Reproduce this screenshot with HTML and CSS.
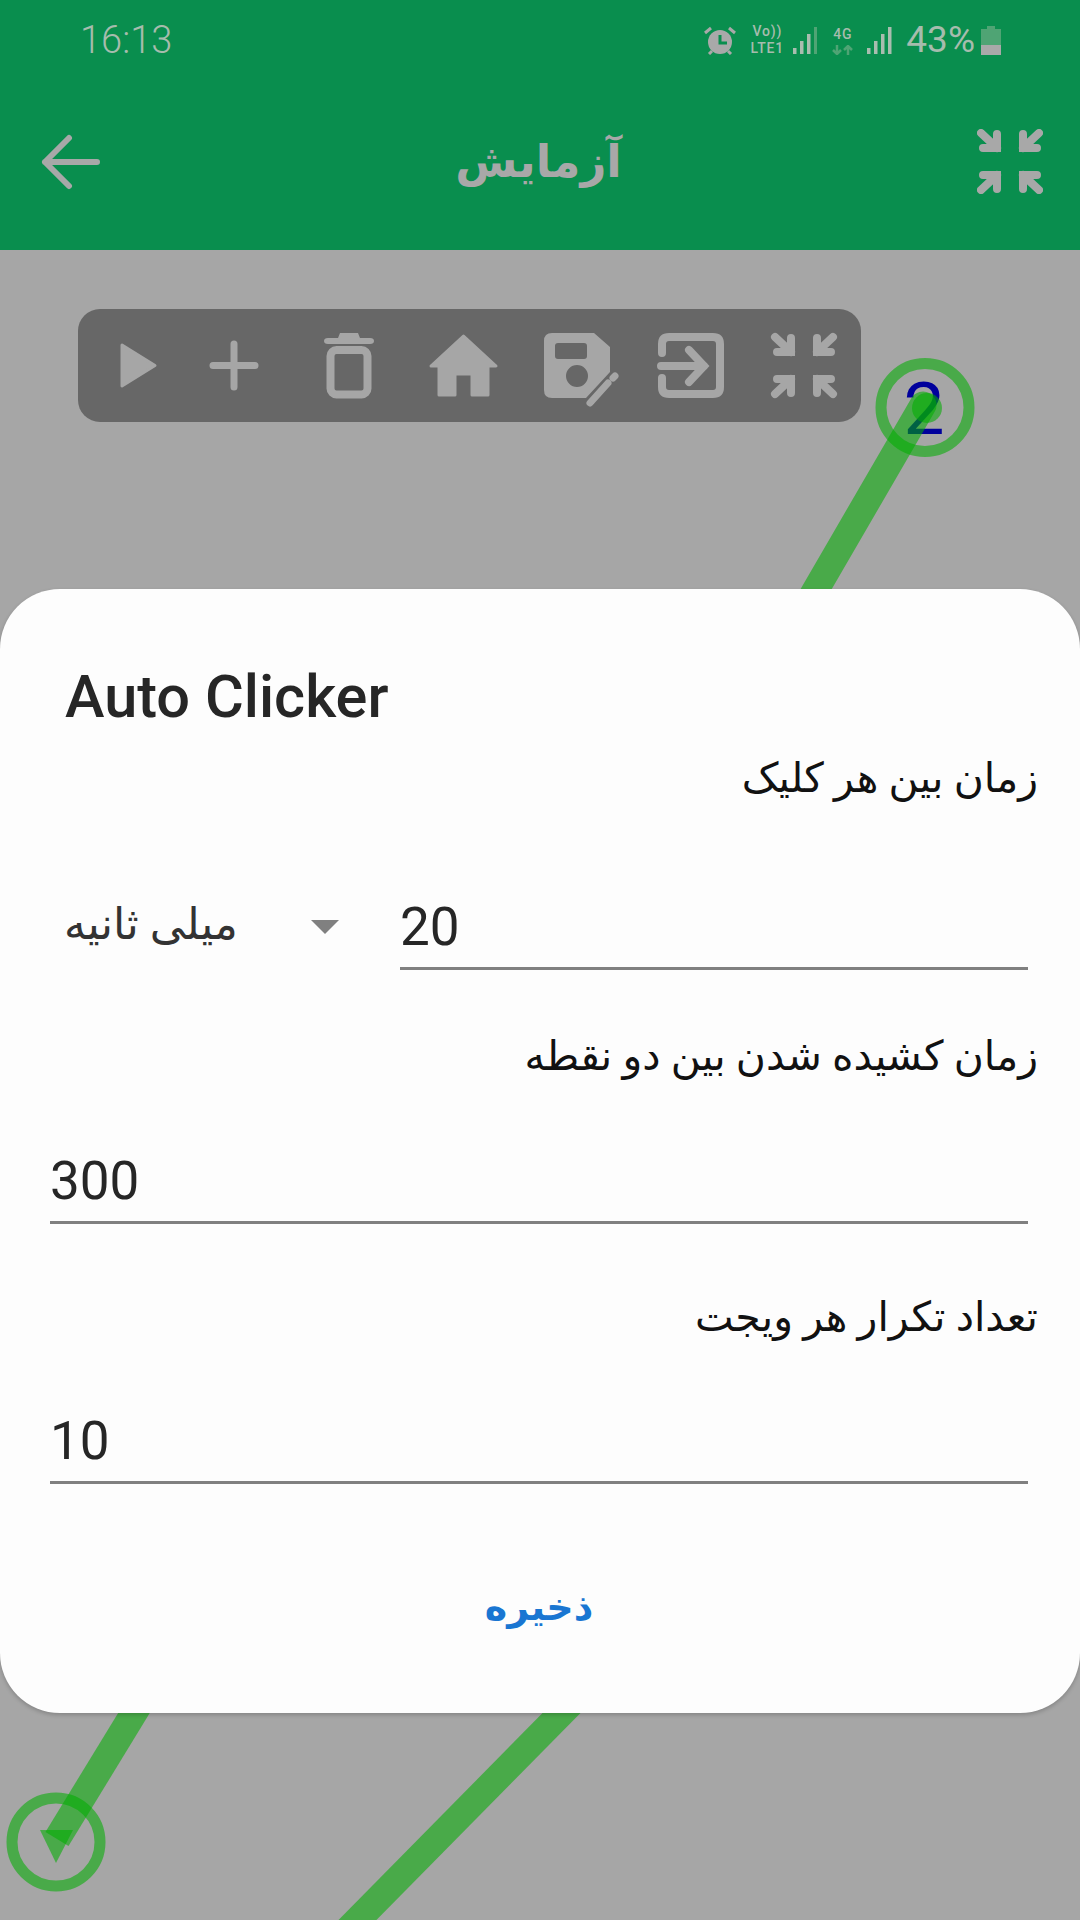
FILE: index.html
```html
<!DOCTYPE html>
<html lang="fa">

<head>
    <meta charset="UTF-8">
    <meta name="viewport" content="width=device-width, initial-scale=1.0">
    <title>Auto Clicker</title>
    <link rel="stylesheet" href="styles.css">
</head>

<body>
    <div class="page">
        <!-- gestures drawn on the canvas, under the dialog -->
        <svg class="gestures" viewBox="0 0 1080 1920">
            <text class="point-num" x="924" y="434">2</text>
            <path class="stroke stroke-round" d="M804 610 L923 405" />
            <circle class="head" cx="927" cy="408" r="15" />
            <circle class="ring" cx="925" cy="407.500" r="44" />
            <path class="stroke" d="M148 1690 L57 1839" />
            <circle class="ring" cx="56" cy="1842" r="44" />
            <polygon class="head" points="40,1830 73,1830 56,1863" />
            <path class="stroke" d="M600 1674 L320 1958" />
        </svg>

        <header class="appbar">
            <div class="status">
                <span class="time">16:13</span>
                <div class="status-right">
                    <svg class="alarm" viewBox="0 0 32 29">
                        <path class="solid" d="M16 4a12 12 0 1 0 0 24a12 12 0 0 0 0-24z" />
                        <path class="cut" d="M16 9v8h7" />
                        <path class="thin" d="M1 7l6-5M31 7l-6-5M5 28l3-3M27 28l-3-3" />
                    </svg>
                    <div class="net net-lte">
                        <span>Vo))</span>
                        <span>LTE1</span>
                    </div>
                    <svg class="bars" viewBox="0 0 25 27">
                        <rect x="0" y="21" width="3.500" height="6" />
                        <rect x="7" y="14" width="3.500" height="13" />
                        <rect x="14" y="7" width="3.500" height="20" />
                        <rect class="off" x="21" y="0" width="3" height="27" />
                    </svg>
                    <div class="net net-4g">
                        <span>4G</span>
                        <svg class="updown" viewBox="0 0 21 10">
                            <path d="M5 0v9M1 5l4 4l4-4M16 10V1M12 5l4-4l4 4" />
                        </svg>
                    </div>
                    <svg class="bars" viewBox="0 0 25 27">
                        <rect x="0" y="21" width="3.500" height="6" />
                        <rect x="7" y="14" width="3.500" height="13" />
                        <rect x="14" y="7" width="3.500" height="20" />
                        <rect x="21" y="0" width="3.500" height="27" />
                    </svg>
                    <span class="percent">43%</span>
                    <svg class="battery" viewBox="0 0 20 29">
                        <path class="battery-empty" d="M6 0h8v3h6v16H0V3h6z" />
                        <rect class="battery-full" x="0" y="19" width="20" height="10" />
                    </svg>
                </div>
            </div>
            <div class="titlebar">
                <svg class="back" viewBox="0 0 59 56">
                    <path d="M4 28H56M28 4L4 28L28 52" />
                </svg>
                <h1 class="title">آزمایش</h1>
                <svg class="shrink" viewBox="0 0 66 65">
                    <path d="M4 4L20 19M20 5V19H6M62 4L46 19M46 5V19H60M4 61L20 46M20 60V46H6M62 61L46 46M46 60V46H60" />
                </svg>
            </div>
        </header>

        <nav class="toolbar">
            <svg class="tool tool-play" viewBox="0 0 37 45">
                <path class="fill" d="M2 2L35 22.500L2 43Z" />
            </svg>
            <svg class="tool tool-plus" viewBox="0 0 50 51">
                <path class="line line-thin" d="M25 4V47M4 25.500H46" />
            </svg>
            <svg class="tool tool-trash" viewBox="0 0 50 65">
                <path class="fill-plain" d="M16 0H34L36 5H46Q50 5 50 8Q50 11 46 11H4Q0 11 0 8Q0 5 4 5H14Z" />
                <rect class="line" x="6.500" y="17" width="37" height="44.500" rx="6" />
            </svg>
            <svg class="tool tool-home" viewBox="0 0 67 61">
                <path class="fill" d="M33.500 1L66 31H58V60H42V39H25V60H9V31H1Z" />
            </svg>
            <svg class="tool tool-save" viewBox="0 0 74 65">
                <path class="fill-plain" fill-rule="evenodd" d="M8 0H50L66 14V39L42 65H8Q0 65 0 57V8Q0 0 8 0ZM14 10Q11 10 11 13V23Q11 26 14 26H40Q43 26 43 23V13Q43 10 40 10ZM33 32a11 11 0 1 0 0 22a11 11 0 0 0 0-22Z" />
                <path class="line line-thin" d="M46 70L64 50M69 45L71 43" />
            </svg>
            <svg class="tool tool-exit" viewBox="0 0 66 65">
                <path class="line" d="M4 20V11Q4 4 11 4H55Q62 4 62 11V54Q62 61 55 61H11Q4 61 4 54V45M3 33H46M31 17L46 33L31 49" />
            </svg>
            <svg class="tool tool-shrink" viewBox="0 0 66 65">
                <path class="line" d="M4 4L20 19M20 5V19H6M62 4L46 19M46 5V19H60M4 61L20 46M20 60V46H6M62 61L46 46M46 60V46H60" />
            </svg>
        </nav>

        <section class="dialog">
            <h2 class="dialog-title">Auto Clicker</h2>

            <p class="label label-first">زمان بین هر کلیک</p>
            <div class="row">
                <div class="unit">
                    <span class="unit-name">میلی ثانیه</span>
                    <span class="caret"></span>
                </div>
                <div class="field field-short">20</div>
            </div>

            <p class="label">زمان کشیده شدن بین دو نقطه</p>
            <div class="field">300</div>

            <p class="label label-third">تعداد تکرار هر ویجت</p>
            <div class="field field-last">10</div>

            <button class="save">ذخیره</button>
        </section>
    </div>
</body>

</html>
```

FILE: styles.css
```css
* {
    margin: 0;
    padding: 0;
    box-sizing: border-box;
}

body {
    width: 1080px;
    height: 1920px;
    overflow: hidden;
    background-color: #a6a6a6;
    font-family: Roboto, "DejaVu Sans", sans-serif;
}

.page {
    position: relative;
    width: 1080px;
    height: 1920px;
    overflow: hidden;
}

.gestures {
    position: absolute;
    left: 0;
    top: 0;
    width: 1080px;
    height: 1920px;
}

.point-num {
    font-family: Roboto, sans-serif;
    font-size: 73px;
    fill: #00009c;
    text-anchor: middle;
}

.stroke {
    fill: none;
    stroke: rgba(0, 173, 0, .56);
    stroke-width: 27;
}

.stroke-round {
    stroke-linecap: round;
}

.ring {
    fill: none;
    stroke: rgba(0, 173, 0, .56);
    stroke-width: 11;
}

.head {
    fill: rgba(0, 173, 0, .56);
}

/* top green bar */
.appbar {
    height: 250px;
    background-color: #098e4e;
    position: relative;
}

.status {
    height: 80px;
    padding: 0 79px 0 80px;
    display: flex;
    justify-content: space-between;
    align-items: center;
    color: #a6bcad;
}

.time {
    font-size: 38px;
    font-weight: 300;
}

.status-right {
    display: flex;
    align-items: center;
}

.alarm {
    width: 32px;
    height: 29px;
    margin-right: 13px;
}

.alarm .solid {
    fill: #a9a9a9;
}

.alarm .cut {
    fill: none;
    stroke: #098e4e;
    stroke-width: 3;
}

.alarm .thin {
    fill: none;
    stroke: #a9a9a9;
    stroke-width: 3;
}

.net {
    display: flex;
    flex-direction: column;
    align-items: center;
    font-size: 14px;
    font-weight: 500;
    line-height: 17px;
    letter-spacing: .8px;
}

.net-lte {
    width: 36px;
    margin-right: 8px;
}

.net-4g {
    width: 21px;
    margin: 0 14px;
}

.bars {
    width: 25px;
    height: 27px;
    fill: #a9bdaf;
}

.bars .off {
    fill: #4fa474;
}

.updown {
    width: 21px;
    height: 10px;
    margin-top: 2px;
    fill: none;
    stroke: #4fa474;
    stroke-width: 2.500;
}

.percent {
    font-size: 37px;
    margin: 0 6px 0 14px;
    line-height: 36px;
}

.battery {
    width: 20px;
    height: 29px;
}

.battery-empty {
    fill: #4fa474;
}

.battery-full {
    fill: #a9a9a9;
}

.titlebar {
    height: 170px;
    padding: 0 37px 7px 41px;
    display: flex;
    justify-content: space-between;
    align-items: center;
}

.back {
    width: 59px;
    height: 56px;
    fill: none;
    stroke: #a8a8a8;
    stroke-width: 6;
    stroke-linecap: round;
    stroke-linejoin: round;
}

.title {
    font-size: 45px;
    font-weight: 700;
    color: #a8a8a8;
    line-height: 62px;
}

.shrink {
    width: 66px;
    height: 65px;
    fill: none;
    stroke: #a8a8a8;
    stroke-width: 8;
    stroke-linecap: round;
}

/* floating toolbar */
.toolbar {
    position: relative;
    width: 783px;
    height: 113px;
    margin: 59px 0 0 78px;
    padding-left: 42px;
    display: flex;
    align-items: center;
    background-color: #676767;
    border-radius: 22px;
}

.tool {
    flex: none;
    overflow: visible;
}

.fill {
    fill: #a6a6a6;
    stroke: #a6a6a6;
    stroke-width: 3;
    stroke-linejoin: round;
}

.fill-plain {
    fill: #a6a6a6;
}

.line {
    fill: none;
    stroke: #a6a6a6;
    stroke-width: 8;
    stroke-linecap: round;
}

.line-thin {
    stroke-width: 7;
}

.tool-play {
    width: 37px;
    height: 45px;
}

.tool-plus {
    width: 50px;
    height: 51px;
    margin-left: 52px;
}

.tool-trash {
    width: 50px;
    height: 65px;
    margin-left: 65px;
}

.tool-home {
    width: 67px;
    height: 61px;
    margin-left: 56px;
}

.tool-save {
    width: 74px;
    height: 65px;
    margin-left: 47px;
}

.tool-exit {
    width: 66px;
    height: 65px;
    margin-left: 40px;
}

.tool-shrink {
    width: 66px;
    height: 65px;
    margin-left: 47px;
}

/* dialog */
.dialog {
    position: relative;
    margin-top: 167px;
    height: 1124px;
    padding: 75px 52px 0 50px;
    background-color: #fdfdfd;
    border-radius: 60px;
    box-shadow: 0 2px 4px rgba(0, 0, 0, .2);
}

.dialog-title {
    margin-left: 15px;
    font-size: 59.500px;
    font-weight: 500;
    line-height: 66px;
    color: #262626;
}

.label {
    direction: rtl;
    margin: 56px -10px 0 0;
    font-size: 41px;
    line-height: 60px;
    color: #111;
}

.label-first {
    margin-top: 18px;
}

.label-third {
    margin-top: 63px;
}

.row {
    display: flex;
    align-items: flex-end;
    margin-top: 78px;
}

.unit {
    width: 336px;
    height: 84px;
    margin-left: 14px;
    display: flex;
    align-items: center;
    justify-content: space-between;
    padding-right: 61px;
}

.unit-name {
    direction: rtl;
    margin-top: -8px;
    font-size: 44px;
    color: #333;
}

.caret {
    width: 0;
    height: 0;
    border-left: 14px solid transparent;
    border-right: 14px solid transparent;
    border-top: 14px solid #808080;
    margin-top: -2px;
}

.field {
    height: 84px;
    margin-top: 54px;
    font-size: 53px;
    line-height: 82px;
    color: #262626;
    border-bottom: 3px solid #808080;
}

.field-short {
    flex: 1;
    margin-top: 0;
}

.field-last {
    margin-top: 53px;
}

.save {
    display: block;
    margin: 101px auto 0;
    background: none;
    border: 0;
    font-family: Roboto, "DejaVu Sans", sans-serif;
    font-size: 38px;
    font-weight: 700;
    color: #1976d2;
}
```
